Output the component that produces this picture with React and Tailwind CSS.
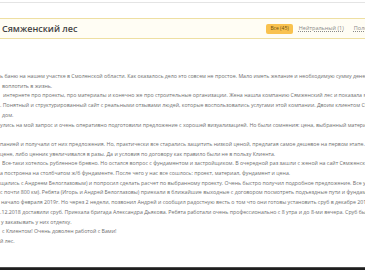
export default function App() {
  const lines = [
    { t: "ь баню на нашем участке в Смоленской области. Как оказалось дело это совсем не простое. Мало иметь желание и необходимую сумму денег, надо", pl: "pl-0" },
    { t: "воплотить в жизнь.", pl: "pl-[2px]" },
    { t: "интернете про проекты, про материалы и конечно же про строительные организации. Жена нашла компанию Сямженский лес и показала мне в интернете", pl: "pl-[3px]" },
    { t: ". Понятный и структурированный сайт с реальными отзывами людей, которые воспользовались услугами этой компании. Двоим клиентом Сямженского", pl: "pl-0" },
    { t: "дом.", pl: "pl-[2px]" },
    { t: "улись на мой запрос и очень оперативно подготовили предложение с хорошей визуализацией. Но были сомнения: цена, выбранный материал и так далее", pl: "pl-0" },
    { t: "\u00a0", pl: "pl-0" },
    { t: "панией и получали от них предложения. Но, практически все старались защитить низкой ценой, предлагая самое дешевое на первом этапе. А когда", pl: "pl-0" },
    { t: "цене, либо ценник увеличивался в разы. Да и условия по договору как правило были не в пользу Клиента.", pl: "pl-0" },
    { t: "Все-таки хотелось рубленное бревно. Но остался вопрос с фундаментом и застройщиком. В очередной раз зашли с женой на сайт Сямженского леса", pl: "pl-[2px]" },
    { t: "а построена на столбчатом ж/б фундаменте. После чего у нас все сошлось: проект, материал, фундамент и цена.", pl: "pl-0" },
    { t: "щались с Андреем Белоглазовым) и попросил сделать расчет по выбранному проекту. Очень быстро получил подробное предложение. Все устроило", pl: "pl-0" },
    { t: "с почти 800 км). Ребята (Игорь и Андрей Белоглазовы) приехали в ближайшие выходные с договором посмотреть подъездные пути и фундамент. Договор", pl: "pl-0" },
    { t: "начало февраля 2019г. Но через 2 недели, позвонил Андрей и сообщил радостную весть о том что они готовы установить сруб в декабре 2018г.", pl: "pl-[1px]" },
    { t: ".12.2018 доставили сруб. Приехала бригада Александра Дьякова. Ребята работали очень профессионально с 8 утра и до 8-ми вечера. Сруб был готов", pl: "pl-0" },
    { t: "у заказывать у них отделку.", pl: "pl-[1px]" },
    { t: "с Клиентом! Очень доволен работой с Вами!", pl: "pl-[2px]" },
    { t: "й лес.", pl: "pl-0" },
  ];
  return (
    <div className="w-[365px] h-[270px] overflow-hidden bg-white flex flex-col" style={{ fontFamily: '"Open Sans", "Noto Sans", sans-serif' }}>
      <div className="h-[2px] shrink-0" />
      <div className="h-px bg-[#e4e4e4] shrink-0" />
      <div className="mt-[15px] h-[21px] shrink-0 border-y border-[#eedfa2] bg-[#fffdf4] flex items-center justify-between pl-[2px]">
        <div className="text-[9px] font-semibold text-[#444] leading-none">Сямженский лес</div>
        <div className="flex items-center gap-[6px] whitespace-nowrap -mr-[44px]">
          <div className="h-[10px] px-[4px] rounded-[2px] bg-[#f9c24f] text-[5px] text-[#6b4e12] flex items-center">Все (45)</div>
          <div className="text-[5.5px] text-[#8a8a8a] underline decoration-dotted">Нейтральный (1)</div>
          <div className="text-[5.5px] text-[#8a8a8a] underline decoration-dotted ml-[4px]">Положительные (44)</div>
        </div>
      </div>
      <div className="mt-[33px] text-[5.25px] leading-[9.7px] text-[#6e6e6e] shrink-0">
        {lines.map((l, i) => (
          <div key={i} className={`whitespace-nowrap overflow-hidden ${l.pl}`}>{l.t}</div>
        ))}
      </div>
      <div className="mt-auto h-[3px] shrink-0 bg-[#1e1e1e] border-t border-[#4d4d4d]" />
    </div>
  );
}
